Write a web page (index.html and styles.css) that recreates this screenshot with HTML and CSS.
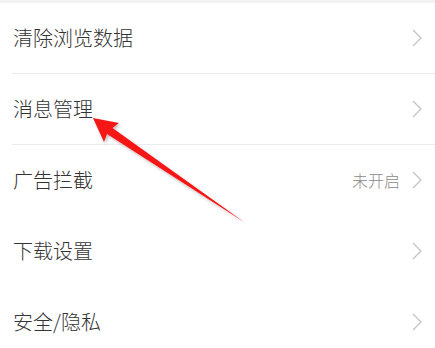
FILE: index.html
```html
<!DOCTYPE html>
<html lang="zh">
<head>
<meta charset="utf-8">
<link rel="stylesheet" href="styles.css">
</head>
<body>
<div class="page">
  <div class="topbar"></div>
  <ul class="list">
    <li class="row divided"><span class="label">清除浏览数据</span><span class="right"><svg class="chev" viewBox="0 0 10 18"><path d="M1 1 L9 9 L1 17" /></svg></span></li>
    <li class="row divided"><span class="label">消息管理</span><span class="right"><svg class="chev" viewBox="0 0 10 18"><path d="M1 1 L9 9 L1 17" /></svg></span></li>
    <li class="row"><span class="label">广告拦截</span><span class="right"><span class="value">未开启</span><svg class="chev" viewBox="0 0 10 18"><path d="M1 1 L9 9 L1 17" /></svg></span></li>
    <li class="row"><span class="label">下载设置</span><span class="right"><svg class="chev" viewBox="0 0 10 18"><path d="M1 1 L9 9 L1 17" /></svg></span></li>
    <li class="row"><span class="label">安全/隐私</span><span class="right"><svg class="chev" viewBox="0 0 10 18"><path d="M1 1 L9 9 L1 17" /></svg></span></li>
  </ul>
  <svg class="arrow" width="435" height="348" viewBox="0 0 435 348">
    <defs>
      <filter id="sh" x="-20%" y="-20%" width="140%" height="140%">
        <feDropShadow dx="1.5" dy="2" stdDeviation="1.8" flood-color="#000" flood-opacity="0.25"/>
      </filter>
    </defs>
    <polygon filter="url(#sh)" fill="#f51414" points="93,118 119,123 112.5,128 244,222 107,134 104,142"/>
  </svg>
</div>
</body>
</html>
```
FILE: styles.css
```css
html, body {
  margin: 0;
  padding: 0;
  background: #ffffff;
}
.page {
  position: relative;
  width: 435px;
  height: 348px;
  overflow: hidden;
  font-family: "Noto Sans CJK SC", "Noto Sans", sans-serif;
}
.topbar {
  height: 3px;
  background: #f2f2f2;
}
.list {
  list-style: none;
  margin: 0;
  padding: 0 0 0 12px;
}
.row {
  display: flex;
  align-items: center;
  justify-content: space-between;
  height: 70px;
  border-bottom: 1px solid transparent;
  padding-left: 1px;
  padding-right: 13px;
}
.row.divided {
  border-bottom-color: #ececec;
}
.label {
  font-size: 20px;
  font-weight: 300;
  color: #333333;
  line-height: 1;
}
.right {
  display: flex;
  align-items: center;
  gap: 12px;
}
.value {
  font-size: 16px;
  font-weight: 300;
  color: #8a8a8a;
  line-height: 1;
}
.chev {
  width: 10px;
  height: 18px;
  display: block;
}
.chev path {
  fill: none;
  stroke: #c4c4c4;
  stroke-width: 1.3;
}
.arrow {
  position: absolute;
  left: 0;
  top: 0;
  pointer-events: none;
}
```
